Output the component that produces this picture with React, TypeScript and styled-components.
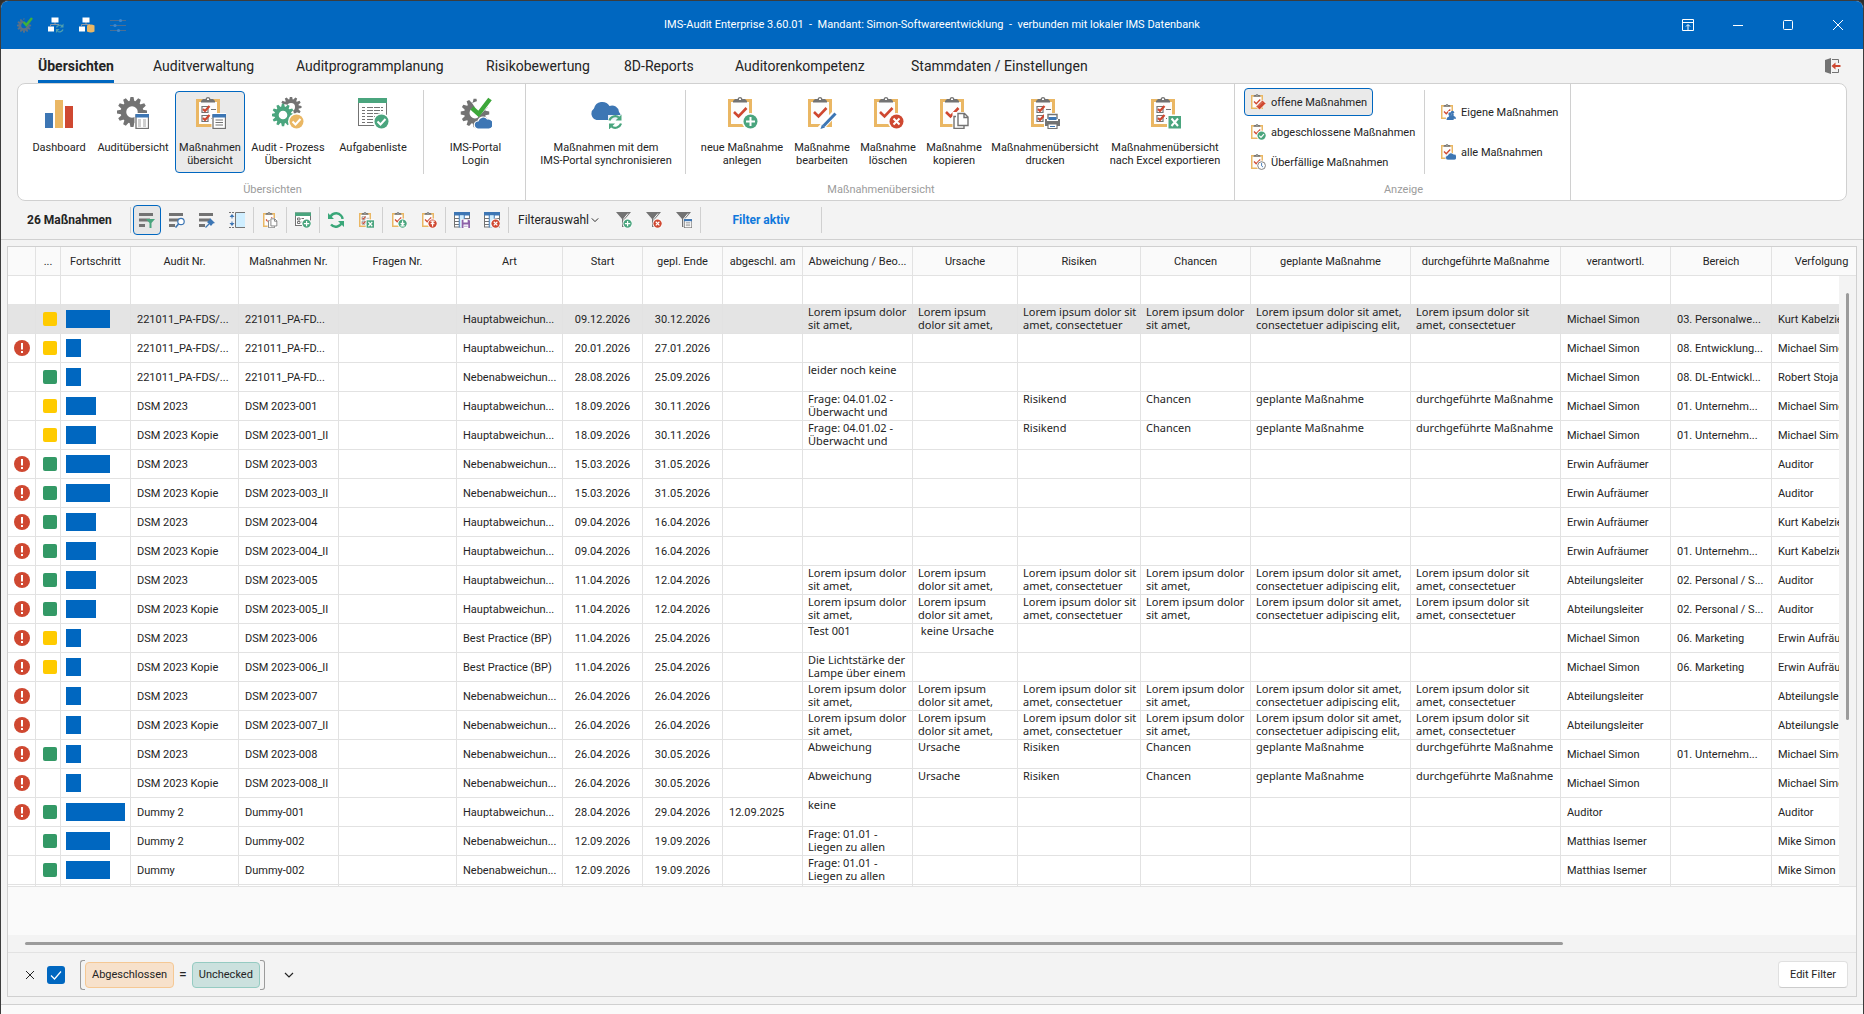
import type { ReactNode } from "react";
import styled, { createGlobalStyle } from "styled-components";

const C = {
    blue: "#0067c0",
    iconBlue: "#3d76b4",
    yellow: "#eab764",
    red: "#cf4831",
    green: "#4aa57e",
    gray: "#737373",
    line: "#d0d0d0",
    cell: "#e2e2e2",
    selected: "#e4e4e4",
    panel: "#f3f3f3",
    text: "#242424",
};

/* ---------- icons ---------- */

function Svg({ size = 32, box = 32, children }: { size?: number; box?: number; children: ReactNode }) {
    return (
        <svg width={size} height={size} viewBox={`0 0 ${box} ${box}`} fill="none" aria-hidden="true">
            {children}
        </svg>
    );
}

function Gear({ x, y, r, teeth = 12, color = C.gray }: { x: number; y: number; r: number; teeth?: number; color?: string }) {
    const outer = r * 1.5;
    return (
        <g transform={`translate(${x} ${y})`}>
            <circle r={r * 0.85} stroke={color} strokeWidth={r * 0.55} />
            {Array.from({ length: teeth }, (_, i) => (
                <path
                    key={i}
                    d={`M${-r * 0.26} ${-r} L${-r * 0.15} ${-outer} H${r * 0.15} L${r * 0.26} ${-r} Z`}
                    fill={color}
                    transform={`rotate(${(360 / teeth) * i})`}
                />
            ))}
        </g>
    );
}

function Board({ list }: { list?: boolean }) {
    return (
        <>
            <rect x="3.500" y="3.500" width="21" height="25" fill="#fdfdfd" stroke={C.yellow} strokeWidth="3" />
            <path d="M7 5.500 V4 L9 2 H11.500 Q12 0 14 0 T16.500 2 H19 L21 4 V5.500 Z" fill={C.gray} />
            <rect x="13" y="1.500" width="2" height="1.500" fill="#fff" />
            {list ? (
                <>
                    <path d="M8 9.500 H14 V15.500 H8 Z M8 18.500 H14 V24.500 H8 Z" stroke={C.gray} strokeWidth="1.200" />
                    <path d="M9 12 L11 14 L15.500 9 M9 21 L11 23 L15.500 18" stroke={C.red} strokeWidth="2.200" />
                    <path d="M17 12.500 H22 M17 21.500 H22" stroke={C.gray} />
                </>
            ) : (
                <path d="M8 15 L12.500 19.500 L20.500 11" stroke={C.red} strokeWidth="2.600" />
            )}
        </>
    );
}

type Mark = "plus" | "cross" | "check" | "okYellow" | "up" | "down" | "clock" | "pencil" | "copy" | "print" | "excel" | "list" | "columns" | "book" | "users" | "cloud" | "save" | "sync";

function Badge({ mark }: { mark: Mark }) {
    const disc = (color: string, d: string) => (
        <>
            <circle cx="24.500" cy="24.500" r="8.500" fill="#fff" />
            <circle cx="24.500" cy="24.500" r="7" fill={color} />
            <path d={d} stroke="#fff" strokeWidth="2" />
        </>
    );
    switch (mark) {
        case "plus":
            return disc(C.green, "M24.500 20 V29 M20 24.500 H29");
        case "cross":
            return disc(C.red, "M21.500 21.500 L27.500 27.500 M27.500 21.500 L21.500 27.500");
        case "check":
            return disc(C.green, "M20.500 24.500 L23.500 27.500 L28.500 22");
        case "okYellow":
            return disc(C.yellow, "M20.500 24.500 L23.500 27.500 L28.500 22");
        case "down":
            return disc(C.green, "M24.500 19.500 V27 M21.500 23.500 L24.500 26.500 L27.500 23.500 M21 28.500 H28");
        case "up":
            return disc(C.red, "M24.500 29.500 V23 M21.500 25.500 L24.500 22.500 L27.500 25.500 M21 20.500 H28");
        case "clock":
            return (
                <>
                    <circle cx="24.500" cy="24.500" r="8.500" fill="#fff" />
                    <circle cx="24.500" cy="24.500" r="6.500" stroke={C.gray} strokeWidth="1.500" />
                    <path d="M24.500 20 V25 L27 27" stroke={C.iconBlue} strokeWidth="1.500" />
                </>
            );
        case "pencil":
            return (
                <>
                    <path d="M14 32 L30 15" stroke="#fff" strokeWidth="6" />
                    <path d="M17.500 29 L29.500 16.500" stroke={C.iconBlue} strokeWidth="3" />
                    <path d="M14.500 32 L16 27.500 L19 30.500 Z" fill={C.iconBlue} />
                </>
            );
        case "book":
            return (
                <>
                    <path d="M15 26 L26 15 L32 21 L21 32 Z" fill={C.red} stroke="#fff" strokeWidth="1.500" />
                    <path d="M18.500 26 L26.500 18" stroke="#fff" opacity="0.500" />
                </>
            );
        case "copy":
            return (
                <>
                    <path d="M14.500 15 H31 V32 H14.500 Z" fill="#fff" />
                    <path d="M18 19.500 H16 V31.500 H26 V29" stroke={C.gray} strokeWidth="1.400" />
                    <path d="M20 16.500 H26.500 L30 20 V28.500 H20 Z M26 16.500 V20.500 H30" fill="#fff" stroke={C.gray} strokeWidth="1.400" />
                </>
            );
        case "print":
            return (
                <>
                    <path d="M15 16 H32 V32 H15 Z" fill="#fff" />
                    <path d="M19 22 V17.500 H28 V22" stroke={C.gray} strokeWidth="1.400" />
                    <rect x="19.500" y="20" width="8" height="3" fill={C.iconBlue} />
                    <path d="M16 22 H18 V24 H29 V22 H31 V29 H16 Z" fill={C.gray} />
                    <path d="M19 27 H28 V31.500 H19 Z" fill="#fff" stroke={C.gray} strokeWidth="1.200" />
                    <path d="M21 29.500 H26" stroke={C.iconBlue} />
                </>
            );
        case "excel":
            return (
                <>
                    <rect x="18" y="17.500" width="14" height="14.500" fill="#fff" />
                    <rect x="19.500" y="19" width="12.500" height="12.500" fill={C.green} />
                    <path d="M22.500 21.500 L29 29 M29 21.500 L22.500 29" stroke="#fff" strokeWidth="2" />
                </>
            );
        case "list":
        case "columns":
            return (
                <>
                    <rect x="17.500" y="16" width="15" height="16" fill="#fff" />
                    <rect x="19" y="18" width="12.500" height="13.500" fill="#fff" stroke={C.gray} strokeWidth="1.300" />
                    <rect x="18.500" y="17" width="13.500" height="3.500" fill={C.iconBlue} />
                    {mark === "list" ? (
                        <path d="M21.500 23 H29 M21.500 25.500 H29 M21.500 28 H29" stroke={C.gray} />
                    ) : (
                        <path d="M21 22 H24 V30 H21 Z M26 22 H29 V30 H26 Z" fill="#cfcfcf" />
                    )}
                </>
            );
        case "users":
            return (
                <>
                    <path d="M15 32 V27 L19 24 V17 H32 V32 Z" fill="#fff" />
                    <circle cx="26" cy="19" r="2.800" fill={C.iconBlue} />
                    <circle cx="22" cy="22" r="3" fill={C.iconBlue} />
                    <path d="M16 32 Q16 27 20 26.500 V24 H24 L25 22 H28 V25 Q32 26 32 30 H28 V32 Z" fill={C.iconBlue} />
                </>
            );
        case "cloud":
            return (
                <path
                    d="M18.500 32 A4 4 0 0 1 18 24 A5.500 5.500 0 0 1 27.500 22 A5 5 0 0 1 29 32 Z"
                    fill={C.iconBlue}
                    stroke="#fff"
                    strokeWidth="1.200"
                />
            );
        case "save":
            return (
                <>
                    <path d="M17 17 H32 V32 H17 Z" fill="#f3f3f3" />
                    <path d="M19 18 H30 L32 20 V32 H18 V19 Z" fill="#8d62a8" />
                    <path d="M21 18 H28 V22.500 H21 Z M21 26 H29 V32 H21 Z" fill="#fff" />
                    <path d="M22 29 H28" stroke="#8d62a8" />
                </>
            );
        case "sync":
            return (
                <>
                    <path d="M18 18 H32 V32 H18 Z" fill="#fff" opacity="0.900" />
                    <path d="M19.500 23.500 A6 6 0 0 1 29 20.500 M31 26.500 A6 6 0 0 1 21.500 29.500" stroke={C.green} strokeWidth="2.200" />
                    <path d="M31.500 17.500 V23.500 H25.500 Z M19 32.500 V26.500 H25 Z" fill={C.green} />
                </>
            );
    }
}

function ClipIcon({ list, mark }: { list?: boolean; mark: Mark }) {
    return (
        <Svg>
            <Board list={list} />
            <Badge mark={mark} />
        </Svg>
    );
}

function SmallClip({ list, mark }: { list?: boolean; mark: Mark }) {
    return (
        <Svg size={16}>
            <Board list={list} />
            <g transform="translate(-6 -6) scale(1.190)">
                <Badge mark={mark} />
            </g>
        </Svg>
    );
}

const ChartIcon = () => (
    <Svg>
        <rect x="2" y="16" width="8" height="15" fill={C.iconBlue} />
        <rect x="12" y="3" width="8" height="28" fill={C.yellow} />
        <rect x="22" y="9" width="8" height="22" fill={C.red} />
    </Svg>
);

const GearIcon = () => (
    <Svg>
        <Gear x={15} y={15} r={10} />
        <Badge mark="columns" />
    </Svg>
);

const ProcessIcon = () => (
    <Svg>
        <Gear x={19} y={10} r={7} />
        <circle cx="11" cy="18" r="11" fill="#fff" />
        <Gear x={11} y={18} r={7.5} color={C.green} />
        <Badge mark="okYellow" />
    </Svg>
);

const TaskIcon = () => (
    <Svg>
        <rect x="1.500" y="1.500" width="28" height="27" fill="#fff" stroke={C.gray} />
        <rect x="1" y="1" width="29" height="5" fill={C.green} />
        <path d="M5 10.500 H8 M5 13.500 H8 M5 16.500 H8 M5 19.500 H8 M5 22.500 H8 M5 25.500 H8" stroke={C.gray} />
        <path d="M10 10.500 H26 M10 13.500 H26 M10 16.500 H26 M10 19.500 H26 M10 22.500 H26 M10 25.500 H26" stroke={C.gray} strokeDasharray="6 1" />
        <Badge mark="check" />
    </Svg>
);

const PortalIcon = () => (
    <Svg>
        <Gear x={15} y={16} r={9.5} />
        <path d="M12 6 L20 18 L34 4 L28 0 Z" fill="#fff" />
        <path d="M12 11 L18.500 17 L30 2" stroke="#3da73a" strokeWidth="4.500" />
        <Badge mark="cloud" />
    </Svg>
);

const CloudSyncIcon = () => (
    <Svg>
        <path d="M6.500 23 A6.500 6.500 0 0 1 4 11.500 A8.500 8.500 0 0 1 19.500 9 A7 7 0 0 1 29 15 A5 5 0 0 1 28 23 Z" fill={C.iconBlue} />
        <Badge mark="sync" />
    </Svg>
);

const Bars = () => <path d="M0 1 H14 V4 H0 Z M0 6.500 H11 V9.500 H0 Z M0 12 H6 V15 H0 Z" fill={C.gray} />;

const BarsFilterIcon = () => (
    <Svg size={16} box={16}>
        <Bars />
        <path d="M7 7 H16 L12.500 11 V16 H10.500 V11 Z" fill={C.green} />
    </Svg>
);

const BarsSearchIcon = () => (
    <Svg size={16} box={16}>
        <Bars />
        <circle cx="12" cy="9.500" r="3.200" fill="#fff" stroke={C.iconBlue} strokeWidth="1.200" />
        <path d="M9.500 12 L6.500 15.500" stroke={C.iconBlue} strokeWidth="1.600" />
    </Svg>
);

const BarsPinIcon = () => (
    <Svg size={16} box={16}>
        <Bars />
        <path d="M11 6 L16 11 L14 11.500 L12 14 L8 10 L10.500 8 Z" fill={C.iconBlue} />
        <path d="M10 12 L6.500 15.500" stroke={C.iconBlue} strokeWidth="1.300" />
    </Svg>
);

const FitWidthIcon = () => (
    <Svg size={16} box={16}>
        <rect x="7" y="1" width="9" height="14" fill="#cfeeff" />
        <path d="M0 0.500 H6 M0 15.500 H6" stroke={C.gray} strokeDasharray="2 1" />
        <path d="M16 0.500 H6.500 V15.500 H16" stroke={C.gray} />
        <path d="M0.500 5 H2.500 V6.500 H3.500 V5 H5.500 L3 2 Z M0.500 11 H2.500 V9.500 H3.500 V11 H5.500 L3 14 Z" fill={C.iconBlue} />
    </Svg>
);

const FormAddIcon = () => (
    <Svg size={16}>
        <rect x="1" y="2" width="30" height="25" fill="#fff" stroke={C.gray} strokeWidth="2" />
        <rect x="0" y="1" width="32" height="7" fill={C.green} />
        <path d="M5 12 H10 V16 H5 Z M5 19 H10 V23 H5 Z M13 13 H18 M13 20 H18" stroke={C.gray} strokeWidth="2" />
        <g transform="translate(-6 -6) scale(1.190)"><Badge mark="plus" /></g>
    </Svg>
);

const RefreshIcon = () => (
    <Svg size={16} box={16}>
        <path d="M2 6.500 A6.300 6.300 0 0 1 13 3.500 Q14.500 5 14.500 7 M14 9.500 A6.300 6.300 0 0 1 3 12.500" stroke="#3aa779" strokeWidth="2.400" />
        <path d="M0 1 V7 H6 Z M16 15 V9 H10 Z" fill="#3aa779" />
    </Svg>
);

const TableIcon = ({ mark }: { mark: Mark }) => (
    <Svg size={16}>
        <rect x="1" y="1" width="30" height="29" fill="#fff" stroke={C.gray} strokeWidth="2" />
        <rect x="0" y="0" width="32" height="7" fill={C.iconBlue} />
        <rect x="11" y="7" width="9" height="24" fill="#cfeeff" />
        <path d="M1 13 H10 M1 19 H10 M1 25 H10 M21 13 H31 M21 19 H31" stroke={C.gray} strokeWidth="2" />
        <path d="M10.500 0 V31 M20.500 0 V31" stroke={C.iconBlue} strokeWidth="2" />
        <g transform="translate(-6 -6) scale(1.190)"><Badge mark={mark} /></g>
    </Svg>
);

const FunnelIcon = ({ mark }: { mark: Mark }) => (
    <Svg size={16}>
        <path d="M0 0 H30 L18 14 V30 H12 V14 Z" fill={C.gray} />
        <path d="M24 3 L16 13 V28" stroke="#fff" strokeWidth="2" />
        <g transform="translate(-6 -6) scale(1.190)"><Badge mark={mark} /></g>
    </Svg>
);

const LogoIcon = () => (
    <Svg size={16}>
        <Gear x={14} y={17} r={9.5} color="#5d7185" />
        <path d="M11 6 L20 18 L32 4 L28 0 Z" fill={C.blue} />
        <path d="M13 10 L18.500 16 L30 2" stroke="#3fb03b" strokeWidth="5" />
    </Svg>
);

const OrgIcon = ({ data }: { data?: boolean }) => (
    <Svg size={16} box={16}>
        <path d="M7 5 V7.500 M2.500 9 V7.500 H11" stroke="#8b97a3" />
        <rect x="3.500" y="0.500" width="7" height="5" fill="#fff" />
        <rect x="0" y="9.500" width="6" height="5" fill="#fff" />
        {data ? (
            <path d="M8 8.500 Q12 6.500 15.500 8.500 V14.500 Q12 16.500 8 14.500 Z" fill={C.yellow} />
        ) : (
            <>
                <path d="M8.500 10.500 A4 3.500 0 0 1 14 8.500 M15 12.500 A4 3.500 0 0 1 9.500 14.500" stroke="#4f9fae" strokeWidth="1.300" />
                <path d="M15.500 6.500 V10.500 H12 Z M8 16 V12 H11.500 Z" fill="#4f9fae" />
            </>
        )}
    </Svg>
);

const SlidersIcon = () => (
    <Svg size={16} box={16}>
        <path d="M0 3.500 H16 M0 8.500 H16 M0 13.500 H16" stroke="#4d6f93" />
        <circle cx="10.500" cy="3.500" r="1.600" fill="#3f87cc" />
        <circle cx="5" cy="8.500" r="1.600" fill="#3f87cc" />
        <circle cx="8.500" cy="13.500" r="1.600" fill="#3f87cc" />
    </Svg>
);

const ExitIcon = () => (
    <Svg size={16} box={16}>
        <path d="M0 2 L6 0 V16 L0 14 Z" fill={C.gray} />
        <path d="M7 1.500 H13.500 V5 M7 14.500 H13.500 V11" stroke={C.gray} />
        <path d="M6.500 8 L10.500 4.500 V7 H15.500 V9 H10.500 V11.500 Z" fill={C.red} />
    </Svg>
);

const ChevronIcon = ({ size = 10 }: { size?: number }) => (
    <Svg size={size} box={10}>
        <path d="M1 3 L5 7 L9 3" stroke={C.text} strokeWidth="1.200" />
    </Svg>
);

const AlertIcon = () => (
    <Svg size={16} box={16}>
        <circle cx="8" cy="8" r="8" fill={C.red} />
        <path d="M8 3 V9.500 M8 11 V13" stroke="#fff" strokeWidth="2" />
    </Svg>
);

/* ---------- data ---------- */

const tabs = [
    { label: "Übersichten", width: 115 },
    { label: "Auditverwaltung", width: 143 },
    { label: "Auditprogrammplanung", width: 190 },
    { label: "Risikobewertung", width: 138 },
    { label: "8D-Reports", width: 111 },
    { label: "Auditorenkompetenz", width: 176 },
    { label: "Stammdaten / Einstellungen", width: 180 },
];

const columns = [
    { title: "", width: 28 },
    { title: "...", width: 25 },
    { title: "Fortschritt", width: 70 },
    { title: "Audit Nr.", width: 108 },
    { title: "Maßnahmen Nr.", width: 100 },
    { title: "Fragen Nr.", width: 118 },
    { title: "Art", width: 106 },
    { title: "Start", width: 80 },
    { title: "gepl. Ende", width: 80 },
    { title: "abgeschl. am", width: 80 },
    { title: "Abweichung / Beo...", width: 110 },
    { title: "Ursache", width: 105 },
    { title: "Risiken", width: 123 },
    { title: "Chancen", width: 110 },
    { title: "geplante Maßnahme", width: 160 },
    { title: "durchgeführte Maßnahme", width: 150 },
    { title: "verantwortl.", width: 110 },
    { title: "Bereich", width: 101 },
    { title: "Verfolgung", width: 100 },
];

type Row = {
    alert?: boolean;
    state?: "y" | "g";
    progress: number;
    audit: string;
    nr: string;
    art: string;
    start: string;
    end: string;
    closed?: string;
    memos?: string[];
    owner: string;
    area?: string;
    follow: string;
};

const haupt = "Hauptabweichun...";
const neben = "Nebenabweichun...";
const lorem = [
    "Lorem ipsum dolor\nsit amet,",
    "Lorem ipsum\ndolor sit amet,",
    "Lorem ipsum dolor sit\namet, consectetuer",
    "Lorem ipsum dolor\nsit amet,",
    "Lorem ipsum dolor sit amet,\nconsectetuer adipiscing elit,",
    "Lorem ipsum dolor sit\namet, consectetuer",
];
const frage = ["Frage: 04.01.02 -\nÜberwacht und", "", "Risikend", "Chancen", "geplante Maßnahme", "durchgeführte Maßnahme"];
const plain = ["Abweichung", "Ursache", "Risiken", "Chancen", "geplante Maßnahme", "durchgeführte Maßnahme"];

const rows: Row[] = [
    { state: "y", progress: 75, audit: "221011_PA-FDS/...", nr: "221011_PA-FD...", art: haupt, start: "09.12.2026", end: "30.12.2026", memos: lorem, owner: "Michael Simon", area: "03. Personalwe...", follow: "Kurt Kabelzie" },
    { alert: true, state: "y", progress: 25, audit: "221011_PA-FDS/...", nr: "221011_PA-FD...", art: haupt, start: "20.01.2026", end: "27.01.2026", owner: "Michael Simon", area: "08. Entwicklung...", follow: "Michael Simo" },
    { state: "g", progress: 25, audit: "221011_PA-FDS/...", nr: "221011_PA-FD...", art: neben, start: "28.08.2026", end: "25.09.2026", memos: ["leider noch keine"], owner: "Michael Simon", area: "08. DL-Entwickl...", follow: "Robert Stoja" },
    { state: "y", progress: 50, audit: "DSM 2023", nr: "DSM 2023-001", art: haupt, start: "18.09.2026", end: "30.11.2026", memos: frage, owner: "Michael Simon", area: "01. Unternehm...", follow: "Michael Simo" },
    { state: "y", progress: 50, audit: "DSM 2023 Kopie", nr: "DSM 2023-001_II", art: haupt, start: "18.09.2026", end: "30.11.2026", memos: frage, owner: "Michael Simon", area: "01. Unternehm...", follow: "Michael Simo" },
    { alert: true, state: "g", progress: 75, audit: "DSM 2023", nr: "DSM 2023-003", art: neben, start: "15.03.2026", end: "31.05.2026", owner: "Erwin Aufräumer", follow: "Auditor" },
    { alert: true, state: "g", progress: 75, audit: "DSM 2023 Kopie", nr: "DSM 2023-003_II", art: neben, start: "15.03.2026", end: "31.05.2026", owner: "Erwin Aufräumer", follow: "Auditor" },
    { alert: true, state: "g", progress: 50, audit: "DSM 2023", nr: "DSM 2023-004", art: haupt, start: "09.04.2026", end: "16.04.2026", owner: "Erwin Aufräumer", follow: "Kurt Kabelzie" },
    { alert: true, state: "g", progress: 50, audit: "DSM 2023 Kopie", nr: "DSM 2023-004_II", art: haupt, start: "09.04.2026", end: "16.04.2026", owner: "Erwin Aufräumer", area: "01. Unternehm...", follow: "Kurt Kabelzie" },
    { alert: true, state: "g", progress: 50, audit: "DSM 2023", nr: "DSM 2023-005", art: haupt, start: "11.04.2026", end: "12.04.2026", memos: lorem, owner: "Abteilungsleiter", area: "02. Personal / S...", follow: "Auditor" },
    { alert: true, state: "g", progress: 50, audit: "DSM 2023 Kopie", nr: "DSM 2023-005_II", art: haupt, start: "11.04.2026", end: "12.04.2026", memos: lorem, owner: "Abteilungsleiter", area: "02. Personal / S...", follow: "Auditor" },
    { alert: true, state: "y", progress: 25, audit: "DSM 2023", nr: "DSM 2023-006", art: "Best Practice (BP)", start: "11.04.2026", end: "25.04.2026", memos: ["Test 001", " keine Ursache"], owner: "Michael Simon", area: "06. Marketing", follow: "Erwin Aufräu" },
    { alert: true, state: "y", progress: 25, audit: "DSM 2023 Kopie", nr: "DSM 2023-006_II", art: "Best Practice (BP)", start: "11.04.2026", end: "25.04.2026", memos: ["Die Lichtstärke der\nLampe über einem"], owner: "Michael Simon", area: "06. Marketing", follow: "Erwin Aufräu" },
    { alert: true, progress: 25, audit: "DSM 2023", nr: "DSM 2023-007", art: neben, start: "26.04.2026", end: "26.04.2026", memos: lorem, owner: "Abteilungsleiter", follow: "Abteilungslei" },
    { alert: true, progress: 25, audit: "DSM 2023 Kopie", nr: "DSM 2023-007_II", art: neben, start: "26.04.2026", end: "26.04.2026", memos: lorem, owner: "Abteilungsleiter", follow: "Abteilungslei" },
    { alert: true, state: "g", progress: 25, audit: "DSM 2023", nr: "DSM 2023-008", art: neben, start: "26.04.2026", end: "30.05.2026", memos: plain, owner: "Michael Simon", area: "01. Unternehm...", follow: "Michael Simo" },
    { alert: true, progress: 25, audit: "DSM 2023 Kopie", nr: "DSM 2023-008_II", art: neben, start: "26.04.2026", end: "30.05.2026", memos: plain, owner: "Michael Simon", follow: "Michael Simo" },
    { alert: true, state: "g", progress: 100, audit: "Dummy 2", nr: "Dummy-001", art: haupt, start: "28.04.2026", end: "29.04.2026", closed: "12.09.2025", memos: ["keine"], owner: "Auditor", follow: "Auditor" },
    { state: "g", progress: 75, audit: "Dummy 2", nr: "Dummy-002", art: neben, start: "12.09.2026", end: "19.09.2026", memos: ["Frage: 01.01 -\nLiegen zu allen"], owner: "Matthias Isemer", follow: "Mike Simon" },
    { state: "g", progress: 75, audit: "Dummy", nr: "Dummy-002", art: neben, start: "12.09.2026", end: "19.09.2026", memos: ["Frage: 01.01 -\nLiegen zu allen"], owner: "Matthias Isemer", follow: "Mike Simon" },
];

/* ---------- page ---------- */

function BigButton({ icon, width, active, children }: { icon: ReactNode; width: number; active?: boolean; children: ReactNode }) {
    return (
        <RibbonButton type="button" $width={width} $active={active}>
            {icon}
            <span>{children}</span>
        </RibbonButton>
    );
}

function Tool({ label, active, children }: { label: string; active?: boolean; children: ReactNode }) {
    return (
        <ToolButton type="button" aria-label={label} $active={active}>
            {children}
        </ToolButton>
    );
}

export default function App() {
    return (
        <>
            <GlobalStyle />
            <Window>
                <TitleBar>
                    <QuickAccess>
                        <QuickButton type="button" aria-label="IMS-Audit"><LogoIcon /></QuickButton>
                        <QuickButton type="button" aria-label="Verbindung"><OrgIcon /></QuickButton>
                        <QuickButton type="button" aria-label="Datenbank"><OrgIcon data /></QuickButton>
                        <QuickButton type="button" aria-label="Optionen"><SlidersIcon /></QuickButton>
                    </QuickAccess>
                    <Title>IMS-Audit Enterprise 3.60.01&nbsp; -&nbsp; Mandant: Simon-Softwareentwicklung&nbsp; -&nbsp; verbunden mit lokaler IMS Datenbank</Title>
                    <WindowControls>
                        <WindowButton type="button" aria-label="Menüband">
                            <Svg size={12} box={12}>
                                <path d="M0.500 0.500 H11.500 V11.500 H0.500 Z M0.500 3.500 H11.500 M6 11 V6 M4 7.500 L6 5.500 L8 7.500" stroke="#fff" />
                            </Svg>
                        </WindowButton>
                        <WindowButton type="button" aria-label="Minimieren">
                            <Svg size={12} box={12}><path d="M1 6.500 H11" stroke="#fff" /></Svg>
                        </WindowButton>
                        <WindowButton type="button" aria-label="Maximieren">
                            <Svg size={12} box={12}><rect x="1.500" y="1.500" width="9" height="9" rx="1" stroke="#fff" /></Svg>
                        </WindowButton>
                        <WindowButton type="button" aria-label="Schließen">
                            <Svg size={12} box={12}><path d="M1 1 L11 11 M11 1 L1 11" stroke="#fff" /></Svg>
                        </WindowButton>
                    </WindowControls>
                </TitleBar>

                <TabBar>
                    {tabs.map((tab, i) => (
                        <Tab key={tab.label} type="button" $width={tab.width} $active={i === 0}>
                            <span>{tab.label}</span>
                        </Tab>
                    ))}
                    <ExitButton type="button" aria-label="Beenden"><ExitIcon /></ExitButton>
                </TabBar>

                <Ribbon>
                    <Group>
                        <GroupItems>
                            <BigButton width={64} icon={<ChartIcon />}>Dashboard</BigButton>
                            <BigButton width={84} icon={<GearIcon />}>Auditübersicht</BigButton>
                            <BigButton width={70} active icon={<ClipIcon list mark="list" />}>Maßnahmen<br />übersicht</BigButton>
                            <BigButton width={86} icon={<ProcessIcon />}>Audit - Prozess<br />Übersicht</BigButton>
                            <BigButton width={84} icon={<TaskIcon />}>Aufgabenliste</BigButton>
                            <RibbonLine />
                            <BigButton width={85} icon={<PortalIcon />}>IMS-Portal<br />Login</BigButton>
                        </GroupItems>
                        <GroupLabel>Übersichten</GroupLabel>
                    </Group>
                    <Group>
                        <GroupItems>
                            <BigButton width={142} icon={<CloudSyncIcon />}>Maßnahmen mit dem<br />IMS-Portal synchronisieren</BigButton>
                            <RibbonLine />
                            <BigButton width={94} icon={<ClipIcon mark="plus" />}>neue Maßnahme<br />anlegen</BigButton>
                            <BigButton width={66} icon={<ClipIcon mark="pencil" />}>Maßnahme<br />bearbeiten</BigButton>
                            <BigButton width={66} icon={<ClipIcon mark="cross" />}>Maßnahme<br />löschen</BigButton>
                            <BigButton width={66} icon={<ClipIcon mark="copy" />}>Maßnahme<br />kopieren</BigButton>
                            <BigButton width={116} icon={<ClipIcon list mark="print" />}>Maßnahmenübersicht<br />drucken</BigButton>
                            <BigButton width={124} icon={<ClipIcon list mark="excel" />}>Maßnahmenübersicht<br />nach Excel exportieren</BigButton>
                        </GroupItems>
                        <GroupLabel>Maßnahmenübersicht</GroupLabel>
                    </Group>
                    <Group>
                        <GroupItems>
                            <SmallColumn $width={172}>
                                <SmallButton type="button" $active><SmallClip mark="book" />offene Maßnahmen</SmallButton>
                                <SmallButton type="button"><SmallClip mark="check" />abgeschlossene Maßnahmen</SmallButton>
                                <SmallButton type="button"><SmallClip mark="clock" />Überfällige Maßnahmen</SmallButton>
                            </SmallColumn>
                            <RibbonLine />
                            <SmallColumn $width={129} $spread>
                                <SmallButton type="button"><SmallClip mark="users" />Eigene Maßnahmen</SmallButton>
                                <SmallButton type="button"><SmallClip mark="cloud" />alle Maßnahmen</SmallButton>
                            </SmallColumn>
                        </GroupItems>
                        <GroupLabel>Anzeige</GroupLabel>
                    </Group>
                </Ribbon>

                <Toolbar>
                    <Count>26 Maßnahmen</Count>
                    <ToolLine />
                    <Tool label="Filterzeile" active><BarsFilterIcon /></Tool>
                    <Tool label="Suchen"><BarsSearchIcon /></Tool>
                    <Tool label="Anheften"><BarsPinIcon /></Tool>
                    <Tool label="Spaltenbreite"><FitWidthIcon /></Tool>
                    <ToolLine />
                    <Tool label="Kopieren"><SmallClip mark="copy" /></Tool>
                    <ToolLine />
                    <Tool label="Neu"><FormAddIcon /></Tool>
                    <ToolLine />
                    <Tool label="Aktualisieren"><RefreshIcon /></Tool>
                    <Tool label="Excel"><SmallClip list mark="excel" /></Tool>
                    <ToolLine />
                    <Tool label="Importieren"><SmallClip mark="down" /></Tool>
                    <Tool label="Exportieren"><SmallClip mark="up" /></Tool>
                    <ToolLine />
                    <Tool label="Layout speichern"><TableIcon mark="save" /></Tool>
                    <Tool label="Layout löschen"><TableIcon mark="cross" /></Tool>
                    <ToolLine />
                    <SelectBox>
                        <select aria-label="Filterauswahl">
                            <option>Filterauswahl</option>
                        </select>
                        <ChevronIcon size={8} />
                    </SelectBox>
                    <Tool label="Filter hinzufügen"><FunnelIcon mark="plus" /></Tool>
                    <Tool label="Filter löschen"><FunnelIcon mark="cross" /></Tool>
                    <Tool label="Filter bearbeiten"><FunnelIcon mark="list" /></Tool>
                    <ToolLine />
                    <FilterState>Filter aktiv</FilterState>
                    <ToolLine />
                </Toolbar>

                <Grid>
                    <GridView>
                        <Table>
                            <colgroup>
                                {columns.map((c, i) => <Col key={i} $width={c.width} />)}
                            </colgroup>
                            <thead>
                                <tr>{columns.map((c, i) => <th key={i}>{c.title}</th>)}</tr>
                            </thead>
                            <tbody>
                                <FilterRow>{columns.map((_, i) => <Cell key={i} />)}</FilterRow>
                                {rows.map((r, i) => (
                                    <DataRow key={i} $selected={i === 0}>
                                        <Cell $align="center">{r.alert && <AlertIcon />}</Cell>
                                        <Cell $align="right">{r.state && <State $color={r.state === "y" ? "#ffcb00" : "#339966"} />}</Cell>
                                        <Cell $tight><Progress style={{ width: `${r.progress}%` }} /></Cell>
                                        <Cell>{r.audit}</Cell>
                                        <Cell>{r.nr}</Cell>
                                        <Cell />
                                        <Cell>{r.art}</Cell>
                                        <Cell $align="center">{r.start}</Cell>
                                        <Cell $align="center">{r.end}</Cell>
                                        <Cell>{r.closed}</Cell>
                                        {[0, 1, 2, 3, 4, 5].map((m) => (
                                            <Cell key={m} $tight><Memo>{r.memos?.[m]}</Memo></Cell>
                                        ))}
                                        <Cell>{r.owner}</Cell>
                                        <Cell>{r.area}</Cell>
                                        <Cell>{r.follow}</Cell>
                                    </DataRow>
                                ))}
                            </tbody>
                            <tfoot>
                                <tr>{columns.map((_, i) => <Stub key={i} />)}</tr>
                            </tfoot>
                        </Table>
                        <VScroll><div /></VScroll>
                    </GridView>
                    <Summary />
                    <HScroll><div /></HScroll>
                    <FilterPanel>
                        <PlainButton type="button" aria-label="Filter schließen">
                            <Svg size={10} box={10}><path d="M1 1 L9 9 M9 1 L1 9" stroke={C.text} /></Svg>
                        </PlainButton>
                        <Check type="checkbox" aria-label="Filter aktiv" defaultChecked />
                        <Bracket>
                            <Chip type="button" $bg="#f7e1cb" $border="#f5c894">Abgeschlossen</Chip>
                            <span>=</span>
                            <Chip type="button" $bg="#cbe1de" $border="#95cbc2">Unchecked</Chip>
                        </Bracket>
                        <PlainButton type="button" aria-label="Letzte Filter"><ChevronIcon /></PlainButton>
                        <EditButton type="button">Edit Filter</EditButton>
                    </FilterPanel>
                </Grid>
                <StatusBar />
            </Window>
        </>
    );
}

/* ---------- styles ---------- */

const GlobalStyle = createGlobalStyle`
    * {
        box-sizing: border-box;
    }

    body {
        margin: 0;
        background-color: #2e2e2e;
        color: ${C.text};
        font-family: Roboto, "Noto Sans", sans-serif;
        font-size: 11px;
        line-height: 13px;
    }

    button, select {
        font: inherit;
        color: inherit;
        margin: 0;
        padding: 0;
        border: 0;
        background: none;
    }

    svg {
        display: block;
        flex: none;
    }
`;

const Window = styled.main`
    display: flex;
    flex-direction: column;
    min-height: 100vh;
    border: 1px solid #3c3c3c;
    border-bottom: 0;
    border-radius: 8px 8px 0 0;
    background-color: ${C.panel};
    overflow: hidden;
`;

const TitleBar = styled.header`
    display: grid;
    grid-template-columns: 1fr auto 1fr;
    align-items: center;
    height: 48px;
    background-color: ${C.blue};
    color: #ffffff;
`;

const QuickAccess = styled.div`
    display: flex;
    padding-left: 8px;
`;

const QuickButton = styled.button`
    display: grid;
    place-items: center;
    width: 31px;
    height: 30px;
`;

const Title = styled.h1`
    margin: 0;
    font-size: 11px;
    font-weight: 400;
    line-height: 16px;
`;

const WindowControls = styled.div`
    display: flex;
    justify-content: flex-end;
`;

const WindowButton = styled.button`
    display: grid;
    place-items: center;
    width: 50px;
    height: 48px;
`;

const TabBar = styled.nav`
    display: flex;
    height: 34px;
    padding: 0 22px 0 37px;
`;

const Tab = styled.button<{ $width: number; $active?: boolean }>`
    display: flex;
    width: ${(p) => p.$width}px;
    font-size: 14px;
    font-weight: ${(p) => (p.$active ? 700 : 400)};
    text-align: left;
    white-space: nowrap;

    span {
        height: 34px;
        line-height: 34px;
        border-bottom: 3px solid ${(p) => (p.$active ? C.blue : "transparent")};
    }
`;

const ExitButton = styled.button`
    display: grid;
    place-items: center;
    margin-left: auto;
`;

const Ribbon = styled.section`
    display: flex;
    height: 118px;
    margin: 0 16px;
    border: 1px solid ${C.line};
    border-radius: 8px;
    background-color: #ffffff;
`;

const Group = styled.div`
    display: flex;
    flex-direction: column;
    justify-content: space-between;
    border-right: 1px solid ${C.line};
    padding: 4px 7px 4px 9px;
`;

const GroupItems = styled.div`
    display: flex;
    align-items: flex-start;
`;

const GroupLabel = styled.div`
    color: #9c9c9c;
    text-align: center;
`;

const RibbonLine = styled.div`
    width: 1px;
    height: 84px;
    margin: 2px 9px 0 8px;
    background-color: ${C.line};
`;

const RibbonButton = styled.button<{ $width: number; $active?: boolean }>`
    display: flex;
    flex-direction: column;
    align-items: center;
    gap: 12px;
    width: ${(p) => p.$width}px;
    height: 82px;
    margin-top: 3px;
    padding-top: 5px;
    border: 1px solid ${(p) => (p.$active ? C.blue : "transparent")};
    border-radius: 4px;
    background-color: ${(p) => (p.$active ? "#eaeaea" : "transparent")};
    white-space: nowrap;
`;

const SmallColumn = styled.div<{ $width: number; $spread?: boolean }>`
    display: flex;
    flex-direction: column;
    align-items: flex-start;
    gap: ${(p) => (p.$spread ? 12 : 2)}px;
    width: ${(p) => p.$width}px;
    padding-top: ${(p) => (p.$spread ? 10 : 0)}px;
`;

const SmallButton = styled.button<{ $active?: boolean }>`
    display: flex;
    align-items: center;
    gap: 5px;
    height: 28px;
    padding: 0 5px;
    border: 1px solid ${(p) => (p.$active ? C.blue : "transparent")};
    border-radius: 4px;
    background-color: ${(p) => (p.$active ? "#eaeaea" : "transparent")};
    white-space: nowrap;
`;

const Toolbar = styled.section`
    display: flex;
    align-items: center;
    gap: 2px;
    height: 39px;
    border-bottom: 1px solid ${C.line};
`;

const Count = styled.strong`
    width: 127px;
    padding-left: 26px;
    font-size: 12px;
    line-height: 16px;
    white-space: nowrap;
`;

const ToolLine = styled.div`
    width: 1px;
    height: 26px;
    background-color: ${C.line};
`;

const ToolButton = styled.button<{ $active?: boolean }>`
    display: grid;
    place-items: center;
    width: 28px;
    height: 30px;
    border: 1px solid ${(p) => (p.$active ? C.blue : "transparent")};
    border-radius: 4px;
    background-color: ${(p) => (p.$active ? "#e6e6e6" : "transparent")};
`;

const SelectBox = styled.div`
    position: relative;
    width: 97px;
    height: 30px;

    select {
        appearance: none;
        width: 100%;
        height: 100%;
        padding-left: 7px;
        font-size: 12px;
    }

    svg {
        position: absolute;
        right: 9px;
        top: 11px;
        pointer-events: none;
    }
`;

const FilterState = styled.strong`
    width: 116px;
    color: #0f78dc;
    font-size: 12px;
    text-align: center;
`;

const Grid = styled.section`
    display: flex;
    flex-direction: column;
    flex: 1;
    margin: 6px 6px 7px;
    border: 1px solid ${C.line};
`;

const GridView = styled.div`
    position: relative;
    overflow: hidden;
    border-bottom: 1px solid ${C.cell};
`;

const Table = styled.table`
    width: 0;
    min-width: 100%;
    table-layout: fixed;
    border-collapse: separate;
    border-spacing: 0;
    background-color: #ffffff;
    white-space: nowrap;

    th {
        height: 29px;
        padding: 0;
        border-right: 1px solid ${C.cell};
        border-bottom: 1px solid ${C.cell};
        background-color: #fafafa;
        font-weight: 400;
        overflow: hidden;
    }
`;

const Col = styled.col<{ $width: number }>`
    width: ${(p) => p.$width}px;
`;

const Cell = styled.td<{ $align?: string; $tight?: boolean }>`
    height: 29px;
    padding: 0 ${(p) => (p.$align === "right" ? 3 : p.$tight ? 5 : p.$align ? 0 : 6)}px;
    border-right: 1px solid ${C.cell};
    border-bottom: 1px solid ${C.cell};
    text-align: ${(p) => p.$align || "left"};
    overflow: hidden;

    svg {
        margin: 0 auto;
    }
`;

const FilterRow = styled.tr`
    td {
        border-bottom-color: ${C.selected};
    }
`;

const DataRow = styled.tr<{ $selected?: boolean }>`
    background-color: ${(p) => (p.$selected ? C.selected : "#ffffff")};
`;

const Stub = styled.td`
    height: 1px;
    padding: 0;
    border-right: 1px solid ${C.cell};
`;

const State = styled.div<{ $color: string }>`
    width: 14px;
    height: 14px;
    margin-left: auto;
    border-radius: 2px;
    background-color: ${(p) => p.$color};
`;

const Progress = styled.div`
    height: 18px;
    background-color: ${C.blue};
`;

const Memo = styled.div`
    height: 28px;
    font-family: "Noto Sans", sans-serif;
    white-space: pre;
`;

const VScroll = styled.div`
    position: absolute;
    top: 29px;
    right: 0;
    bottom: 0;
    width: 17px;
    padding-top: 17px;
    background-color: ${C.panel};

    div {
        width: 3px;
        height: 72%;
        margin: 0 auto;
        border-radius: 2px;
        background-color: #9b9b9b;
    }
`;

const Summary = styled.div`
    flex: 1;
    min-height: 48px;
    background-color: #fafafa;
`;

const HScroll = styled.div`
    height: 18px;
    padding: 7px 22px 7px 17px;
    border-bottom: 1px solid ${C.cell};

    div {
        width: 85%;
        height: 3px;
        border-radius: 2px;
        background-color: #9b9b9b;
    }
`;

const FilterPanel = styled.div`
    display: flex;
    align-items: center;
    height: 43px;
    padding: 0 8px 0 12px;
`;

const PlainButton = styled.button`
    display: grid;
    place-items: center;
    width: 20px;
    height: 20px;
`;

const Check = styled.input`
    appearance: none;
    width: 18px;
    height: 18px;
    margin: 0 15px 0 7px;
    border-radius: 3px;
    background: ${C.blue} url("data:image/svg+xml,%3Csvg xmlns='http://www.w3.org/2000/svg' viewBox='0 0 18 18'%3E%3Cpath d='M4 9.500 L7.500 13 L14 5.500' fill='none' stroke='white' stroke-width='1.200'/%3E%3C/svg%3E");
`;

const Bracket = styled.div`
    display: flex;
    align-items: center;
    position: relative;
    height: 30px;
    margin-right: 14px;
    padding: 0 5px;
    gap: 5px;

    &::before,
    &::after {
        content: "";
        position: absolute;
        top: 0;
        bottom: 0;
        width: 4px;
        border: 1px solid #9b9b9b;
    }

    &::before {
        left: 0;
        border-right: 0;
        border-radius: 3px 0 0 3px;
    }

    &::after {
        right: 0;
        border-left: 0;
        border-radius: 0 3px 3px 0;
    }

    span {
        font-size: 14px;
    }
`;

const Chip = styled.button<{ $bg: string; $border: string }>`
    height: 26px;
    padding: 0 6px;
    border: 1px solid ${(p) => p.$border};
    border-radius: 4px;
    background-color: ${(p) => p.$bg};
`;

const EditButton = styled.button`
    width: 70px;
    height: 27px;
    margin-left: auto;
    border: 1px solid #e0e0e0;
    border-bottom-color: #cccccc;
    border-radius: 4px;
    background-color: #ffffff;
`;

const StatusBar = styled.footer`
    height: 11px;
    border-top: 1px solid ${C.line};
    background-color: #fafafa;
`;
